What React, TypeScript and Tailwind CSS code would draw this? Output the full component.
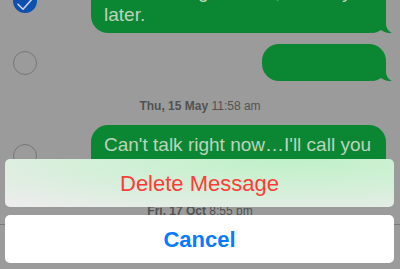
import React from 'react';

const GREEN = '#0b8734';

const Tail = () => (
  <svg className="absolute right-[-6px] bottom-0 w-[20px] h-[18px]" viewBox="0 0 20 18">
    <path d="M0 0H14V8C14 13 16.5 16.5 20 18C15.5 18.3 11.5 17 9 15C7 16.5 4 18 0 18Z" fill={GREEN} />
  </svg>
);

interface BubbleProps {
  lines?: string[];
  width: string;
  height?: string;
}

const Bubble = ({ lines, width, height }: BubbleProps) => (
  <div className={`relative ml-auto bg-[#0b8734] rounded-[17px] ${width} ${height ?? ''}`}>
    {lines && (
      <div className="px-[13px] pt-[8px] pb-[7px] text-[19px] leading-[23px] text-[#bcd4bd] whitespace-nowrap">
        {lines.map((l, i) => (
          <div key={i}>{l}</div>
        ))}
      </div>
    )}
    <Tail />
  </div>
);

const Circle = ({ checked, className = '' }: { checked?: boolean; className?: string }) =>
  checked ? (
    <div className={`w-6 h-6 shrink-0 rounded-full bg-[#0f4fae] relative ${className}`}>
      <svg className="absolute inset-0" viewBox="0 0 24 24" fill="none">
        <path d="M5 15.2L10 20.2L18.5 10.7" stroke="#c9d3e4" strokeWidth="1.6" strokeLinecap="round" strokeLinejoin="round" />
      </svg>
    </div>
  ) : (
    <div className={`w-6 h-6 shrink-0 rounded-full border border-[#767676] ${className}`} />
  );

const DateLine = ({ day, time, className = '' }: { day: string; time: string; className?: string }) => (
  <div className={`text-center text-[12px] leading-[14px] text-[#525252] ${className}`}>
    <span className="font-bold">{day}</span> {time}
  </div>
);

export default function App() {
  return (
    <div className="w-[400px] h-[269px] relative overflow-hidden bg-[#9b9b9b] font-['Liberation_Sans',Arial,sans-serif]">
      <div className="flex flex-col h-full">
        <div className="h-[224px] overflow-hidden flex flex-col">
          <div className="flex items-center pl-[13px] pr-[14px] mt-[-28px]">
            <Circle checked className="mb-[4px]" />
            <Bubble width="w-[295px]" lines={["In a meeting at work, I'll call you", 'later.']} />
          </div>
          <div className="flex items-center pl-[13px] pr-[14px] mt-[11px]">
            <Circle />
            <Bubble width="w-[124px]" height="h-[37px]" />
          </div>
          <DateLine day="Thu, 15 May" time="11:58 am" className="mt-[18px]" />
          <div className="flex items-center pl-[13px] pr-[14px] mt-[12px]">
            <Circle />
            <Bubble width="w-[295px]" lines={['Can\u2019t talk right now\u2026I\u2019ll call you'.replace(/\u2019/g, "'"), 'later.']} />
          </div>
          <DateLine day="Fri, 17 Oct" time="8:55 pm" className="mt-[18px]" />
        </div>
        <div className="flex-1 border-t border-[#7a7a7a]" />
      </div>

      <div className="absolute left-[5px] right-[6px] top-[159px] flex flex-col gap-[8px]">
        <button className="h-[48px] rounded-[5px] bg-[radial-gradient(120%_150%_at_72%_0%,#bff1c8_0%,#d5efd9_45%,#ececec_85%)] text-[22px] text-[#fc3d39]">
          Delete Message
        </button>
        <button className="h-[48px] rounded-[5px] bg-white text-[22px] font-bold text-[#0a7afe]">
          Cancel
        </button>
      </div>
    </div>
  );
}
